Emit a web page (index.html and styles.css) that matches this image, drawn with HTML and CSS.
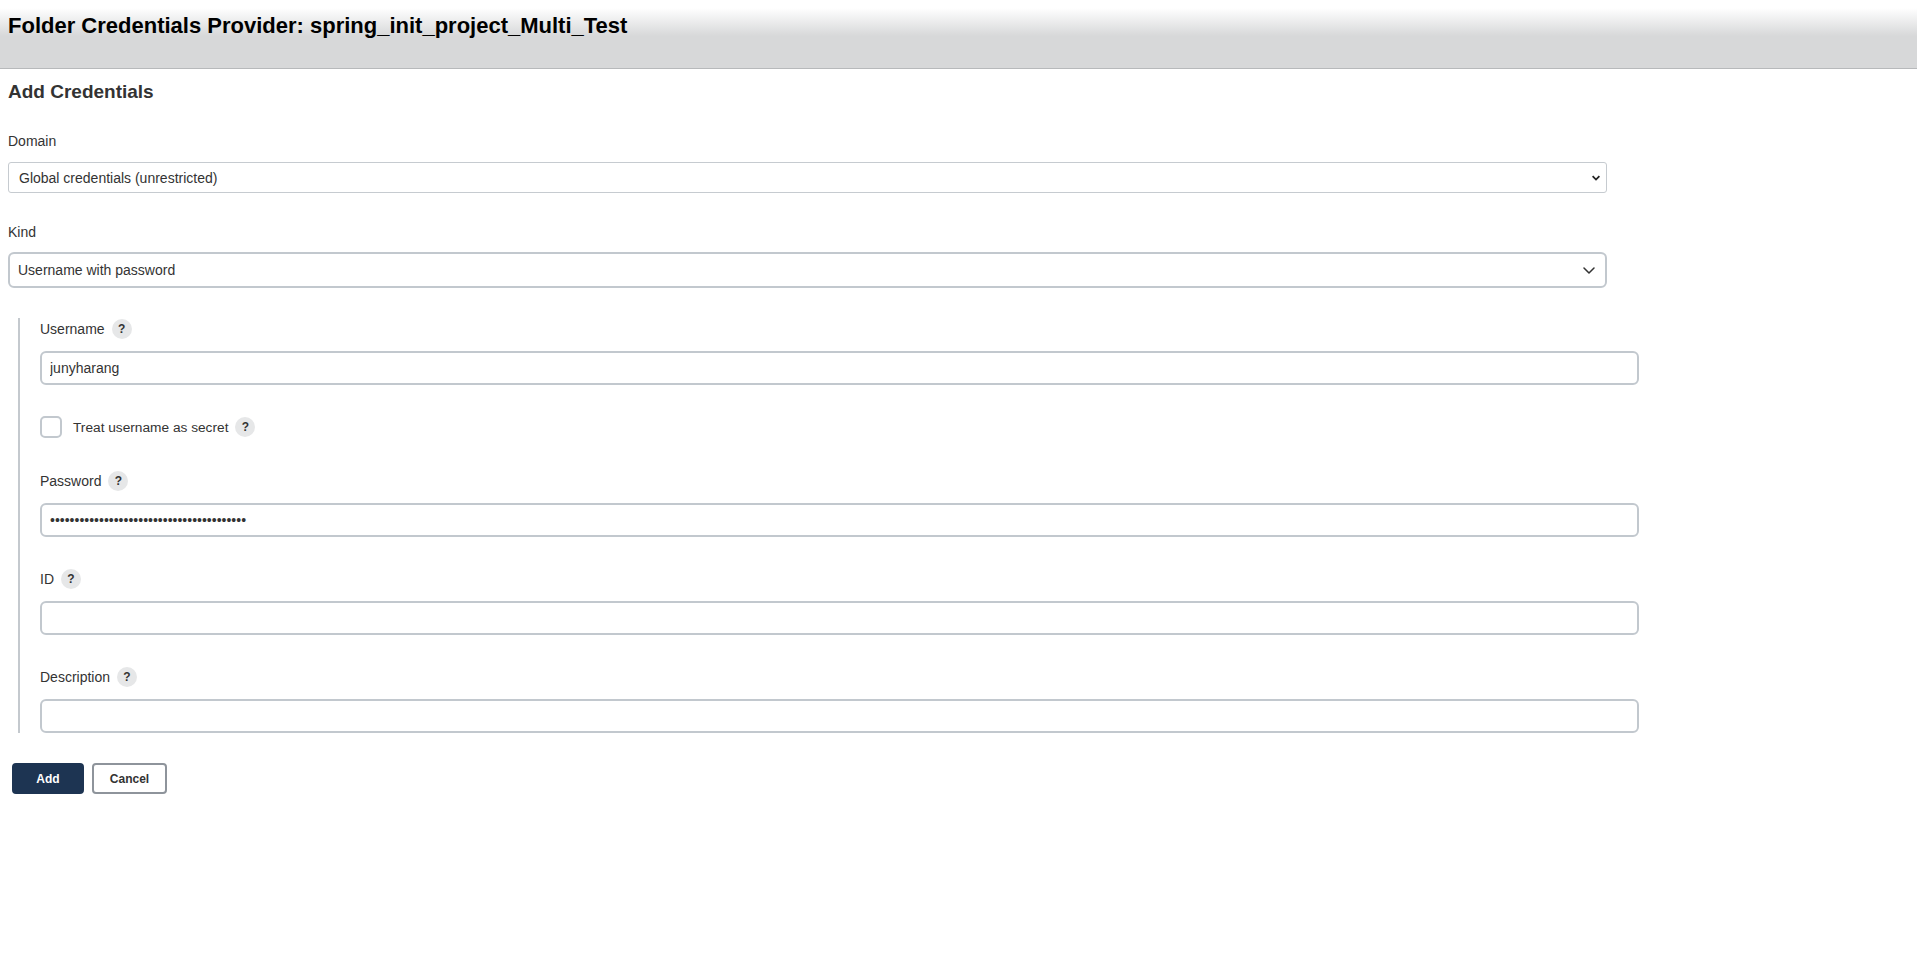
FILE: index.html
```html
<!DOCTYPE html>
<html lang="en">
<head>
<meta charset="utf-8">
<title>Folder Credentials Provider: spring_init_project_Multi_Test</title>
<link rel="stylesheet" href="styles.css">
</head>
<body>
<header class="page-header">
  <div class="page-title">Folder Credentials Provider: spring_init_project_Multi_Test</div>
</header>
<main class="main">
  <h1 class="section-title">Add Credentials</h1>
  <form class="form">
    <div class="label label-domain">Domain</div>
    <div class="select-wrap select-wrap-small">
      <select class="select select-small">
        <option>Global credentials (unrestricted)</option>
      </select>
      <svg class="chev-small" width="8" height="6" viewBox="0 0 8 6"><path d="M0.6 1.2 L4 4.6 L7.4 1.2" fill="none" stroke="#222" stroke-width="1.8"/></svg>
    </div>

    <div class="label label-kind">Kind</div>
    <div class="select-wrap select-wrap-large">
      <select class="select select-large">
        <option>Username with password</option>
      </select>
      <svg class="chev-large" width="12" height="7" viewBox="0 0 12 7"><path d="M1 1 L6 6 L11 1" fill="none" stroke="#333" stroke-width="1.5" stroke-linecap="round" stroke-linejoin="round"/></svg>
    </div>

    <div class="nested">
      <div class="label-row">
        <span class="label-text">Username</span>
        <span class="help">?</span>
      </div>
      <input class="input" type="text" value="junyharang">

      <div class="check-row">
        <span class="checkbox"></span>
        <span class="check-text">Treat username as secret</span>
        <span class="help">?</span>
      </div>

      <div class="label-row label-row-pw">
        <span class="label-text">Password</span>
        <span class="help">?</span>
      </div>
      <input class="input" type="password" value="0123456789012345678901234567890123456789">

      <div class="label-row">
        <span class="label-text">ID</span>
        <span class="help">?</span>
      </div>
      <input class="input" type="text" value="">

      <div class="label-row">
        <span class="label-text">Description</span>
        <span class="help">?</span>
      </div>
      <input class="input" type="text" value="">
    </div>

    <div class="buttons">
      <button type="button" class="btn btn-primary">Add</button>
      <button type="button" class="btn btn-secondary">Cancel</button>
    </div>
  </form>
</main>
</body>
</html>
```
FILE: styles.css
```css
* { box-sizing: border-box; }

html, body {
  margin: 0;
  padding: 0;
  background: #fff;
}

body {
  font-family: "Liberation Sans", Arial, sans-serif;
  font-size: 14px;
  color: #333;
}

.page-header {
  height: 69px;
  background: linear-gradient(to bottom, #ffffff 0px, #ffffff 8px, #d7d8d9 36px, #d7d8d9 100%);
  border-bottom: 1px solid #b7b9bb;
  padding: 13px 8px 0 8px;
}

.page-title {
  font-size: 22px;
  font-weight: bold;
  line-height: 26px;
  color: #000;
}

.main {
  padding: 0 8px;
}

.section-title {
  margin: 11px 0 0 0;
  font-size: 19px;
  line-height: 24px;
  font-weight: bold;
  color: #333;
}

.form {
  width: 1631px;
}

.label {
  height: 21px;
  line-height: 21px;
  font-size: 14px;
  color: #333;
}

.label-domain { margin-top: 27px; }
.label-kind { margin-top: 29px; }

.select-wrap {
  position: relative;
  width: 1599px;
}

.select-wrap-small { margin-top: 10px; }
.select-wrap-large { margin-top: 9px; }

.select {
  -webkit-appearance: none;
  appearance: none;
  display: block;
  width: 100%;
  font-family: "Liberation Sans", Arial, sans-serif;
  font-size: 14px;
  color: #333;
  background: #fff;
  outline: none;
}

.select-small {
  height: 31px;
  border: 1px solid #c6cbd0;
  border-radius: 3px;
  padding: 0 10px;
}

.select-large {
  height: 36px;
  border: 2px solid #c2c8ce;
  border-radius: 6px;
  padding: 0 8px;
}

.chev-small {
  position: absolute;
  right: 7px;
  top: 13px;
}

.chev-large {
  position: absolute;
  right: 12px;
  top: 15px;
}

.nested {
  margin-top: 30px;
  margin-left: 10px;
  border-left: 2px solid #c4c9ce;
  padding-left: 20px;
  padding-bottom: 0;
}

.label-row {
  display: flex;
  align-items: center;
  height: 21px;
  margin-top: 31px;
}

.nested > .label-row:first-child { margin-top: 0; }
.label-row-pw { margin-top: 32px; }

.label-text {
  font-size: 14px;
  color: #333;
}

.help {
  display: inline-flex;
  align-items: center;
  justify-content: center;
  width: 20px;
  height: 20px;
  border-radius: 50%;
  background: #e6e7e8;
  color: #333;
  font-size: 12px;
  font-weight: bold;
  margin-left: 7px;
}

.input {
  display: block;
  width: 1599px;
  height: 34px;
  margin-top: 12px;
  border: 2px solid #c2c8ce;
  border-radius: 6px;
  padding: 0 8px;
  font-family: "Liberation Sans", Arial, sans-serif;
  font-size: 14px;
  color: #333;
  background: #fff;
  outline: none;
}

.check-row {
  display: flex;
  align-items: center;
  height: 22px;
  margin-top: 31px;
}

.checkbox {
  width: 22px;
  height: 22px;
  border: 2px solid #c2c8ce;
  border-radius: 5px;
  background: #fff;
}

.check-text {
  margin-left: 11px;
  font-size: 13.7px;
  color: #333;
}

.buttons {
  display: flex;
  gap: 8px;
  margin-top: 30px;
  margin-left: 4px;
}

.btn {
  height: 31px;
  border-radius: 4px;
  font-family: "Liberation Sans", Arial, sans-serif;
  font-size: 12px;
  font-weight: bold;
  cursor: pointer;
}

.btn-primary {
  width: 72px;
  background: #1d3452;
  border: 2px solid #1d3452;
  color: #fff;
}

.btn-secondary {
  width: 75px;
  background: #fff;
  border: 2px solid #8e949b;
  color: #333;
}
```
